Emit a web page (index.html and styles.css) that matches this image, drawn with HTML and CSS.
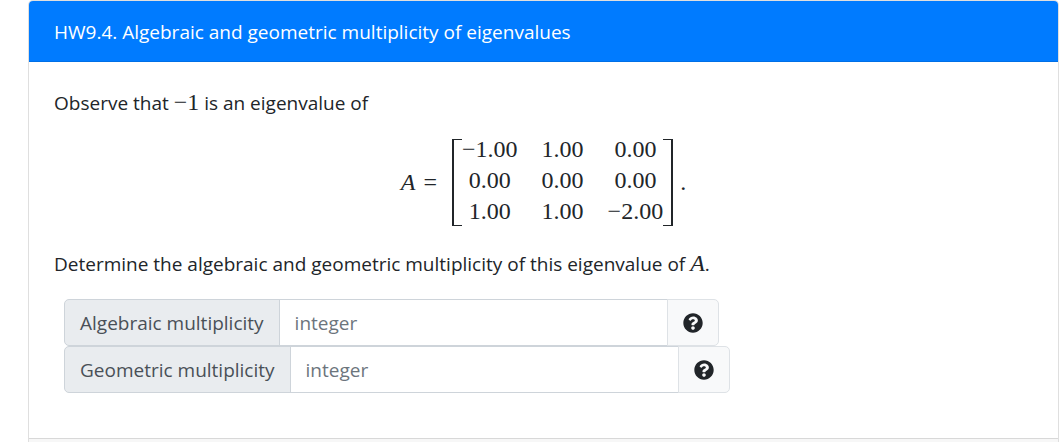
FILE: index.html
```html
<!DOCTYPE html>
<html lang="en">
<head>
<meta charset="UTF-8" />
<meta name="viewport" content="width=device-width, initial-scale=1" />
<title>HW9.4. Algebraic and geometric multiplicity of eigenvalues</title>
<link rel="stylesheet" href="styles.css">
</head>
<body>
<main class="card">
  <h1 class="card-header">HW9.4. Algebraic and geometric multiplicity of eigenvalues</h1>
  <form class="card-body">
    <p>Observe that <span class="math">−1</span> is an eigenvalue of</p>

    <div class="equation">
      <span class="equation-left"><i>A</i> <span>=</span></span>
      <div class="matrix">
        <table>
          <tr><td>−1.00</td><td>1.00</td><td>0.00</td></tr>
          <tr><td>0.00</td><td>0.00</td><td>0.00</td></tr>
          <tr><td>1.00</td><td>1.00</td><td>−2.00</td></tr>
        </table>
      </div>
      <span class="equation-end">.</span>
    </div>

    <p>Determine the algebraic and geometric multiplicity of this eigenvalue of <i class="math">A</i>.</p>

    <div class="answers">
      <div class="input-group">
        <label for="algebraic">Algebraic multiplicity</label>
        <input type="text" id="algebraic" placeholder="integer" autocomplete="off" />
        <button type="button" aria-label="Help for algebraic multiplicity">
          <svg viewBox="0 0 512 512" aria-hidden="true"><path d="M504 256c0 137-111 248-248 248S8 393 8 256 119 8 256 8s248 111 248 248zM262.700 90c-54.500 0-89.300 23-116.500 63.800-3.500 5.300-2.400 12.400 2.700 16.300l34.700 26.300c5.200 3.900 12.600 3 16.700-2.100 17.900-22.700 30.100-35.800 57.300-35.800 20.400 0 45.700 13.100 45.700 33 0 15-12.400 22.700-32.500 34C247.100 238.500 216 255 216 296v4c0 6.600 5.400 12 12 12h56c6.600 0 12-5.400 12-12v-1.300c0-28.800 84.200-30 84.200-107.700C380.200 132.300 319.500 90 262.700 90zM256 338c-25.400 0-46 20.600-46 46s20.600 46 46 46 46-20.600 46-46-20.600-46-46-46z"/></svg>
        </button>
      </div>
      <div class="input-group">
        <label for="geometric">Geometric multiplicity</label>
        <input type="text" id="geometric" placeholder="integer" autocomplete="off" />
        <button type="button" aria-label="Help for geometric multiplicity">
          <svg viewBox="0 0 512 512" aria-hidden="true"><path d="M504 256c0 137-111 248-248 248S8 393 8 256 119 8 256 8s248 111 248 248zM262.700 90c-54.500 0-89.300 23-116.500 63.800-3.500 5.300-2.400 12.400 2.700 16.300l34.700 26.300c5.200 3.900 12.600 3 16.700-2.100 17.900-22.700 30.100-35.800 57.300-35.800 20.400 0 45.700 13.100 45.700 33 0 15-12.400 22.700-32.500 34C247.100 238.500 216 255 216 296v4c0 6.600 5.400 12 12 12h56c6.600 0 12-5.400 12-12v-1.300c0-28.800 84.200-30 84.200-107.700C380.200 132.300 319.500 90 262.700 90zM256 338c-25.400 0-46 20.600-46 46s20.600 46 46 46 46-20.600 46-46-20.600-46-46-46z"/></svg>
        </button>
      </div>
    </div>
  </form>
  <footer class="card-footer"></footer>
</main>
</body>
</html>
```
FILE: styles.css
```css
* {
  box-sizing: border-box;
}

body {
  margin: 0;
  padding: 0 2px 0 28px;
  background: #fff;
  color: #212529;
  font-family: 'Segoe UI', 'Open Sans', 'Noto Sans', sans-serif;
  font-size: 19px;
  line-height: 30px;
}

.card {
  border: 1px solid #dfdfdf;
  border-bottom: none;
  border-radius: 5px 5px 0 0;
  overflow: hidden;
}

.card-header {
  margin: 0;
  padding: 16px 25px 14px;
  background: #007bff;
  border-bottom: 1px solid #006fe6;
  color: #fff;
  font-size: 19px;
  font-weight: normal;
}

.card-body {
  padding: 26px 25px 45px;
}

p {
  margin: 0 0 20px;
}

/* Math */
.math,
.equation {
  font-family: 'Liberation Serif', serif;
  font-size: 24px;
}

.math {
  line-height: 1;
}

.equation {
  display: flex;
  justify-content: center;
  align-items: center;
  gap: 15px;
  margin-bottom: 24px;
}

.equation-left {
  display: flex;
  gap: 8px;
}

.equation-end {
  margin-left: -8px;
}

.matrix {
  position: relative;
  padding: 0 10px;
}

/* Square brackets */
.matrix::before,
.matrix::after {
  content: "";
  position: absolute;
  top: 1px;
  bottom: -1px;
  width: 8px;
  border: 2px solid #212529;
  border-width: 1px 0 1px 2px;
}

.matrix::before {
  left: 0;
}

.matrix::after {
  right: 0;
  border-width: 1px 2px 1px 0;
}

table {
  border-collapse: collapse;
  margin: -5px 0 -1px;
}

td {
  padding: 0 0 0 24px;
  height: 31px;
  text-align: center;
}

td:first-child {
  padding-left: 0;
}

/* Answer boxes */
.answers {
  padding: 0 10px;
}

.input-group {
  display: flex;
  height: 47px;
}

.input-group label {
  padding: 8px 15px;
  background: #e9ecef;
  border: 1px solid #ced4da;
  border-radius: 5px 0 0 5px;
  color: #495057;
}

.input-group input {
  width: 389px;
  min-width: 0;
  margin-left: -1px;
  padding: 8px 15px;
  border: 1px solid #ced4da;
  border-radius: 0;
  font: inherit;
}

.input-group input::placeholder {
  color: #6c757d;
}

.input-group button {
  display: flex;
  align-items: center;
  margin-left: -1px;
  padding: 0 15px;
  background: #f8f9fa;
  border: 1px solid #dee2e6;
  border-radius: 0 5px 5px 0;
  cursor: pointer;
}

.input-group svg {
  width: 20px;
  height: 20px;
  fill: #212529;
}

.card-footer {
  min-height: 4px;
  background: #f7f7f7;
  border-top: 1px solid #d8d8d8;
}
```
